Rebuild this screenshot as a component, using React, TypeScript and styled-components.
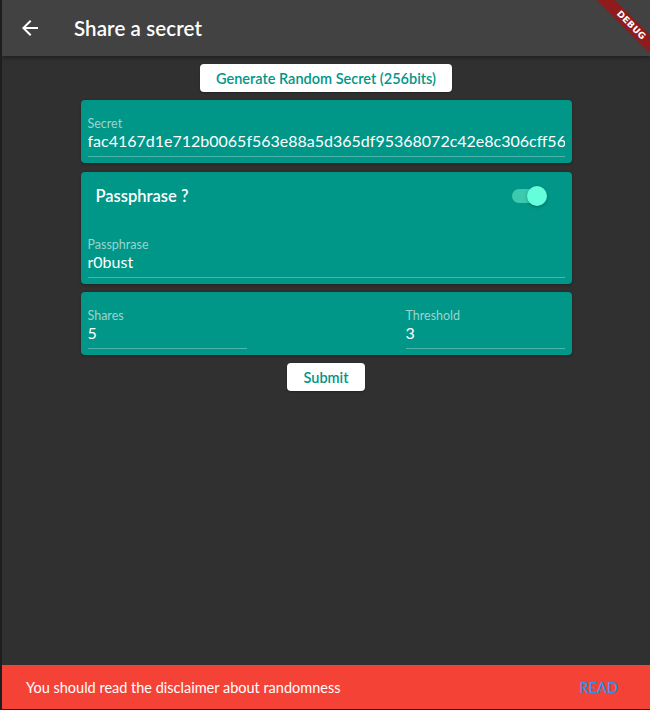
import React, { useState } from 'react';
import styled, { createGlobalStyle } from 'styled-components';

const GlobalStyle = createGlobalStyle`
  html, body {
    margin: 0;
    padding: 0;
    height: 100%;
    background: #1e1e1e;
  }
  #root {
    height: 100%;
  }
  * {
    box-sizing: border-box;
  }
`;

const SECRET = 'fac4167d1e712b0065f563e88a5d365df95368072c42e8c306cff5683b9e1d27';

function Field({ label, value, width }: { label: string; value: string; width?: number }) {
  return (
    <FieldBox width={width}>
      <Label>{label}</Label>
      <Input defaultValue={value} readOnly />
    </FieldBox>
  );
}

export default function App() {
  const [withPassphrase, setWithPassphrase] = useState(true);

  return (
    <Frame>
      <GlobalStyle />
      <AppBar>
        <BackButton aria-label="back">
          <svg width="24" height="24" viewBox="0 0 24 24">
            <path d="M20 11H7.83l5.59-5.59L12 4l-8 8 8 8 1.41-1.41L7.83 13H20v-2z" fill="#fff" />
          </svg>
        </BackButton>
        <Title>Share a secret</Title>
      </AppBar>
      <Body>
        <WhiteButton>Generate Random Secret (256bits)</WhiteButton>
        <Card spaceAfter={1}>
          <Field label="Secret" value={SECRET} />
        </Card>
        <Card>
          <SwitchRow>
            <SwitchLabel>Passphrase ?</SwitchLabel>
            <Switch on={withPassphrase} onClick={() => setWithPassphrase(!withPassphrase)}>
              <Track on={withPassphrase} />
              <Thumb on={withPassphrase} />
            </Switch>
          </SwitchRow>
          <Field label="Passphrase" value="r0bust" />
        </Card>
        <Card>
          <SplitRow>
            <Field label="Shares" value="5" width={159} />
            <Field label="Threshold" value="3" width={159} />
          </SplitRow>
        </Card>
        <WhiteButton>Submit</WhiteButton>
      </Body>
      <SnackBar>
        <SnackText>You should read the disclaimer about randomness</SnackText>
        <SnackAction>READ</SnackAction>
      </SnackBar>
      <DebugRibbon>DEBUG</DebugRibbon>
    </Frame>
  );
}

const Frame = styled.div`
  position: relative;
  display: flex;
  flex-direction: column;
  margin-left: 2px;
  margin-bottom: 1px;
  height: 709px;
  background: #303030;
  overflow: hidden;
  font-family: Lato, "Open Sans", sans-serif;
`;

const AppBar = styled.header`
  position: relative;
  z-index: 1;
  display: flex;
  align-items: center;
  height: 56px;
  flex-shrink: 0;
  background: #424242;
  box-shadow: 0 2px 4px rgba(0, 0, 0, 0.35);
`;

const BackButton = styled.button`
  display: grid;
  place-items: center;
  width: 24px;
  height: 24px;
  margin-left: 16px;
  padding: 0;
  background: none;
  border: none;
`;

const Title = styled.h1`
  margin: 0 0 0 32px;
  color: #fff;
  font-size: 20.5px;
  font-weight: 600;
  letter-spacing: 0.1px;
`;

const Body = styled.main`
  flex: 1;
  display: flex;
  flex-direction: column;
  align-items: center;
  gap: 8px;
  padding-top: 8px;
`;

const WhiteButton = styled.button`
  height: 28px;
  padding: 0 16px;
  background: #fff;
  color: #009688;
  border: none;
  border-radius: 4px;
  font-family: Lato, "Open Sans", sans-serif;
  font-size: 14.5px;
  font-weight: 600;
  box-shadow: 0 1px 2px rgba(0, 0, 0, 0.3);
`;

const Card = styled.section<{ spaceAfter?: number }>`
  display: flex;
  flex-direction: column;
  width: 491px;
  margin-bottom: ${props => props.spaceAfter ?? 0}px;
  padding: 18px 7px 6px;
  background: #009688;
  border-radius: 4px;
  box-shadow: 0 1px 3px rgba(0, 0, 0, 0.3);
`;

const FieldBox = styled.div<{ width?: number }>`
  display: flex;
  flex-direction: column;
  width: ${props => (props.width ? `${props.width}px` : '100%')};
  border-bottom: 1px solid #4db6ac;
`;

const Label = styled.label`
  color: #99d5cf;
  font-size: 12.5px;
  line-height: 12px;
  height: 12px;
`;

const Input = styled.input`
  width: 100%;
  height: 26px;
  padding: 0 0 6px;
  background: transparent;
  border: none;
  outline: none;
  color: #fff;
  font-family: Lato, "Open Sans", sans-serif;
  font-size: 16px;
  line-height: 20px;
`;

const SwitchRow = styled.div`
  display: flex;
  align-items: center;
  justify-content: space-between;
  height: 16px;
  margin: -2px 0 35px;
  padding: 0 18px 0 8px;
`;

const SwitchLabel = styled.span`
  color: #fff;
  font-size: 16.5px;
  font-weight: 600;
`;

const Switch = styled.div<{ on: boolean }>`
  position: relative;
  width: 36px;
  height: 20px;
  cursor: pointer;
`;

const Track = styled.div<{ on: boolean }>`
  position: absolute;
  left: 1px;
  top: 3px;
  width: 30px;
  height: 14px;
  border-radius: 7px;
  background: ${props => (props.on ? '#3cc9ad' : '#9e9e9e')};
`;

const Thumb = styled.div<{ on: boolean }>`
  position: absolute;
  top: 0;
  left: ${props => (props.on ? '16px' : '0')};
  width: 20px;
  height: 20px;
  border-radius: 50%;
  background: ${props => (props.on ? '#64ffda' : '#fafafa')};
  box-shadow: 0 1px 3px rgba(0, 0, 0, 0.3);
`;

const SplitRow = styled.div`
  display: flex;
  justify-content: space-between;
`;

const SnackBar = styled.footer`
  display: flex;
  align-items: center;
  justify-content: space-between;
  height: 44px;
  flex-shrink: 0;
  padding: 0 32px 0 24px;
  background: #f44336;
`;

const SnackText = styled.span`
  color: #fff;
  font-size: 14.5px;
`;

const SnackAction = styled.button`
  padding: 0;
  background: none;
  border: none;
  color: #2196f3;
  font-family: Lato, "Open Sans", sans-serif;
  font-size: 14.5px;
  font-weight: 600;
`;

const DebugRibbon = styled.div`
  position: absolute;
  top: 19px;
  right: -26px;
  width: 90px;
  height: 13px;
  transform: rotate(45deg);
  background: #8e1c1c;
  color: #fff;
  font-family: "DejaVu Sans", sans-serif;
  font-size: 9px;
  font-weight: 700;
  line-height: 13px;
  text-align: center;
  letter-spacing: 0.3px;
  z-index: 2;
`;
